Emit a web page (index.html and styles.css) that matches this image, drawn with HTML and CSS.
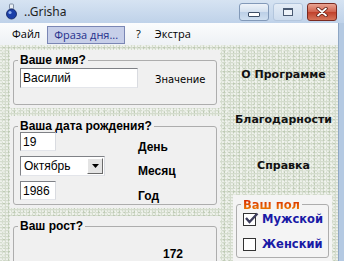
FILE: index.html
```html
<!DOCTYPE html>
<html lang="ru">
<head>
  <meta charset="UTF-8" />
  <title>..Grisha</title>
  <link rel="stylesheet" href="styles.css">
</head>
<body>
  <div class="window">
    <div class="titlebar">
      <svg class="app-icon" viewBox="0 0 13 17" width="13" height="17">
        <rect x="4.5" y="1" width="4" height="5" rx="1" fill="#e8eef4" stroke="#6a7a90" stroke-width="0.8"/>
        <circle cx="6.5" cy="11" r="5" fill="#1b3fa8" stroke="#0c1e5c" stroke-width="0.8"/>
        <circle cx="5" cy="9.5" r="1.6" fill="#8fb0f0"/>
      </svg>
      <span class="title">..Grisha</span>
      <div class="caption-buttons">
        <span class="cap-btn min"><i></i></span>
        <span class="cap-btn max"><i></i></span>
        <span class="cap-btn close">
          <svg viewBox="0 0 12 10" width="12" height="10">
            <path d="M2 1.5 L10 8.5 M10 1.5 L2 8.5" stroke="#5a1a10" stroke-width="3.4" stroke-linecap="round"/>
            <path d="M2 1.5 L10 8.5 M10 1.5 L2 8.5" stroke="#fff" stroke-width="1.8" stroke-linecap="round"/>
          </svg>
        </span>
      </div>
    </div>

    <div class="frame-body">
      <div class="menubar">
        <span class="menu-item">Файл</span>
        <span class="menu-item active">Фраза дня...</span>
        <span class="menu-item">?</span>
        <span class="menu-item">Экстра</span>
      </div>

      <div class="client">
        <div class="left-col">
          <div class="group g-name">
            <fieldset>
              <legend>Ваше имя?</legend>
              <div class="name-row">
                <input class="edit name-edit" type="text" value="Василий">
                <span class="value-label">Значение</span>
              </div>
            </fieldset>
          </div>

          <div class="group g-date">
            <fieldset>
              <legend>Ваша дата рождения?</legend>
              <div class="date-grid">
                <input class="edit short-edit" type="text" value="19">
                <span class="field-label">День</span>
                <div class="combo">
                  <span class="combo-text">Октябрь</span>
                  <span class="combo-btn">
                    <svg viewBox="0 0 7 4" width="7" height="4"><path d="M0 0 H7 L3.5 4 Z" fill="#000"/></svg>
                  </span>
                </div>
                <span class="field-label">Месяц</span>
                <input class="edit short-edit" type="text" value="1986">
                <span class="field-label">Год</span>
              </div>
            </fieldset>
          </div>

          <div class="group g-height">
            <fieldset>
              <legend>Ваш рост?</legend>
              <div class="height-value">172</div>
            </fieldset>
          </div>
        </div>

        <div class="right-col">
          <div class="link-btn">О Программе</div>
          <div class="link-btn">Благодарности</div>
          <div class="link-btn">Справка</div>

          <div class="sex-group">
            <fieldset>
              <legend><span class="sex-title">Ваш пол</span></legend>
              <div class="check-row">
                <span class="check-box">
                  <svg viewBox="0 0 15 13" width="15" height="13"><path d="M2 6 L5.5 10 L13.5 1.5" fill="none" stroke="#3c3c5a" stroke-width="2.4"/></svg>
                </span>
                <span class="check-text">Мужской</span>
              </div>
              <div class="check-row">
                <span class="check-box"></span>
                <span class="check-text">Женский</span>
              </div>
            </fieldset>
          </div>
        </div>
      </div>
    </div>
  </div>
</body>
</html>
```

FILE: styles.css
```css
body {
  margin: 0;
  width: 344px;
  height: 261px;
  overflow: hidden;
  font-family: "Liberation Sans", Arial, sans-serif;
  font-size: 12px;
  color: #000;
}
.window {
  width: 344px;
  height: 261px;
  display: flex;
  flex-direction: column;
  background: #b4c9e2;
}

/* title bar */
.titlebar {
  height: 23px;
  flex: none;
  display: flex;
  align-items: center;
  padding-left: 5px;
  background: linear-gradient(#d6e3f2, #bfd2e9);
}
.app-icon {
  flex: none;
}
.title {
  margin-left: 6px;
  font-family: "Noto Sans", sans-serif;
  font-size: 12px;
  color: #1e1e1e;
}
.caption-buttons {
  margin-left: auto;
  margin-right: 7px;
  align-self: flex-start;
  margin-top: 3px;
  display: flex;
  gap: 4px;
}
.cap-btn {
  width: 30px;
  height: 18px;
  box-sizing: border-box;
  border-radius: 3px;
  display: flex;
  align-items: center;
  justify-content: center;
}
.cap-btn.min {
  border: 1px solid #8299b8;
  background: linear-gradient(#eef3f9, #d3e0ef 50%, #bccfe6 51%, #cfdff0);
  align-items: flex-end;
  padding-bottom: 3px;
}
.cap-btn.min i {
  width: 10px;
  height: 3px;
  background: #fff;
  border: 1px solid #3d4e66;
  border-radius: 1px;
}
.cap-btn.max {
  border: 1px solid #b3c6dd;
  background: linear-gradient(#e4ecf6, #cddcee);
}
.cap-btn.max i {
  width: 8px;
  height: 5px;
  border: 1px solid #4a5a72;
  border-top-width: 2px;
  background: #eef3f9;
}
.cap-btn.close {
  border: 1px solid #7a2a20;
  background: linear-gradient(#e9a493, #d0614c 50%, #c0402a 51%, #d6755a);
}

/* menu */
.frame-body {
  flex: 1;
  display: flex;
  flex-direction: column;
  margin-right: 5px;
  border-right: 1px solid #8ea6c4;
  min-height: 0;
}
.menubar {
  height: 22px;
  flex: none;
  display: flex;
  align-items: center;
  padding-left: 5px;
  background: linear-gradient(#fbfcfd, #eef1f5);
  font-family: "Open Sans", sans-serif;
  font-size: 11px;
}
.menu-item {
  padding: 0 6px;
  height: 18px;
  line-height: 16px;
  box-sizing: border-box;
  border: 1px solid transparent;
}
.menu-item.active {
  background: #c7cfe9;
  border-color: #7a86b4;
  color: #1f2f8c;
  margin-top: 1px;
  margin-right: 4px;
}

/* client area */
.client {
  flex: 1;
  display: flex;
  overflow: hidden;
  min-height: 0;
  background:
    radial-gradient(circle at 30% 40%, rgba(255,255,255,0.6) 0.7px, transparent 1.3px) 0 0 / 3px 3px,
    radial-gradient(circle at 60% 70%, rgba(140,160,125,0.3) 0.8px, transparent 1.5px) 1px 0 / 5px 4px,
    radial-gradient(circle at 20% 80%, rgba(255,255,255,0.5) 1px, transparent 1.8px) 2px 1px / 7px 6px,
    #d4dccd;
}
.left-col {
  width: 210px;
  flex: none;
  padding: 5px 0 0 10px;
  display: flex;
  flex-direction: column;
  gap: 8px;
}
.group {
  display: flex;
  padding: 3px;
  background: #f0f0f0;
  flex: none;
}
.g-name { height: 52px; }
.g-date { height: 86px; }
.g-height { height: 60px; }
fieldset {
  flex: 1;
  margin: 0;
  min-width: 0;
  padding: 0 0 0 6px;
  border: 1px solid #adadad;
  border-radius: 3px;
}
legend {
  padding: 0 2px;
  margin-left: -2px;
  font-weight: bold;
  font-size: 12px;
  line-height: 14px;
}
.edit {
  box-sizing: border-box;
  height: 20px;
  margin: 0;
  padding: 0 2px;
  border: 1px solid;
  border-color: #7f8186 #d9dbe0 #e3e5ea #7f8186;
  background: #fff;
  font-family: "Liberation Sans", Arial, sans-serif;
  font-size: 12px;
  color: #000;
  outline: none;
}
.name-row {
  display: flex;
  align-items: flex-start;
  margin-top: 1px;
}
.name-edit {
  width: 118px;
}
.value-label {
  margin: 6px 0 0 17px;
  font-family: "DejaVu Sans", sans-serif;
  font-size: 10px;
}
.date-grid {
  display: grid;
  grid-template-columns: 118px auto;
  grid-template-rows: 19px 20px 19px;
  row-gap: 5px;
  margin-top: -1px;
}
.short-edit {
  width: 36px;
  height: 19px;
}
.field-label {
  font-weight: bold;
  line-height: 14px;
  margin-top: 8px;
}
.combo {
  width: 85px;
  height: 20px;
  box-sizing: border-box;
  border: 1px solid;
  border-color: #7f8186 #d9dbe0 #e3e5ea #7f8186;
  background: #fff;
  display: flex;
  align-items: center;
}
.combo-text {
  flex: 1;
  padding-left: 3px;
}
.combo-btn {
  width: 16px;
  height: 16px;
  margin-right: 1px;
  box-sizing: border-box;
  border: 1px solid;
  border-color: #fff #6a6a6a #6a6a6a #fff;
  background: #e4e4e4;
  display: flex;
  align-items: center;
  justify-content: center;
}
.height-value {
  margin: 15px 0 0 143px;
  font-weight: bold;
  line-height: 13px;
}

/* right column */
.right-col {
  flex: 1;
  margin-left: 9px;
  padding-top: 7px;
  display: flex;
  flex-direction: column;
}
.link-btn {
  height: 48px;
  display: flex;
  align-items: center;
  justify-content: center;
  font-family: "DejaVu Sans", sans-serif;
  font-weight: bold;
  font-size: 11px;
  color: #111;
}
.sex-group {
  margin: 7px 6px 0 4px;
  padding: 3px;
  height: 60px;
  display: flex;
  background: #f4f4f4;
}
.sex-group legend {
  font-family: "DejaVu Sans", sans-serif;
  font-size: 11.5px;
}
.sex-title {
  background: linear-gradient(#d41a00, #f08c00);
  -webkit-background-clip: text;
  background-clip: text;
  color: transparent;
}
.check-row {
  display: flex;
  align-items: center;
  gap: 6px;
  height: 13px;
  margin-top: 1px;
  margin-bottom: 12px;
}
.check-box {
  width: 13px;
  height: 13px;
  box-sizing: border-box;
  border: 1px solid #333;
  background: #fff;
  position: relative;
}
.check-box svg {
  position: absolute;
  left: 0;
  top: -2px;
}
.check-text {
  font-family: "DejaVu Sans", sans-serif;
  font-weight: bold;
  font-size: 11.5px;
  color: #1a1aa6;
}
```
